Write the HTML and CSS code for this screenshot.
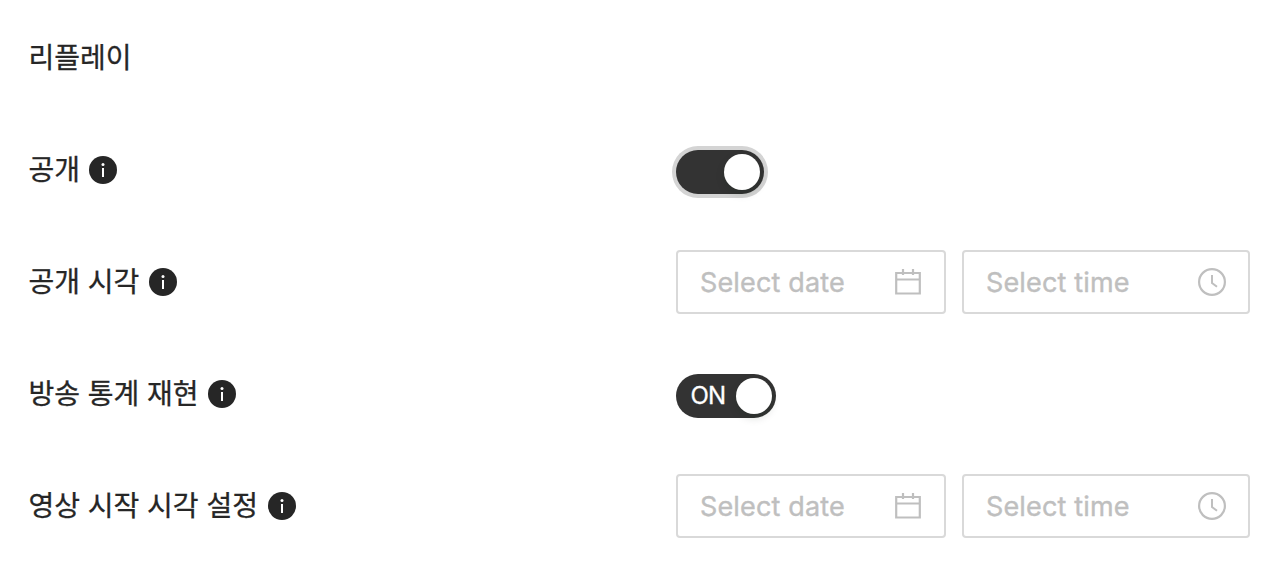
FILE: index.html
```html
<!DOCTYPE html>
<html lang="ko">
<head>
  <meta charset="UTF-8">
  <title>리플레이</title>
  <link rel="stylesheet" href="styles.css">
</head>
<body>
  <!-- 아이콘 -->
  <svg class="sprite" width="0" height="0">
    <symbol id="info" viewBox="0 0 28 28">
      <circle cx="14" cy="14" r="14" fill="#262626"/>
      <circle cx="14" cy="8.5" r="1.5" fill="#fff"/>
      <rect x="13" y="12" width="2" height="9" fill="#fff"/>
    </symbol>
    <symbol id="calendar" viewBox="0 0 28 28">
      <path d="M2.2 5h23.6v20.500H2.200zM2 11.500h24M9 1v6M19 1v6" fill="none" stroke="currentColor" stroke-width="2.2"/>
    </symbol>
    <symbol id="clock" viewBox="0 0 28 28">
      <circle cx="14" cy="14" r="12.9" fill="none" stroke="currentColor" stroke-width="2.2"/>
      <path d="M14 7v8l5 3.700" fill="none" stroke="currentColor" stroke-width="2"/>
    </symbol>
  </svg>

  <div class="replay">
    <div class="row">
      <div class="label"><span>리플레이</span></div>
    </div>
    <div class="row">
      <div class="label"><span>공개</span><svg class="info"><use href="#info"/></svg></div>
      <button class="switch focus"><span class="handle"></span></button>
    </div>
    <div class="row">
      <div class="label"><span>공개 시각</span><svg class="info"><use href="#info"/></svg></div>
      <div class="pickers">
        <div class="picker date"><span class="placeholder">Select date</span><svg class="icon"><use href="#calendar"/></svg></div>
        <div class="picker time"><span class="placeholder">Select time</span><svg class="icon"><use href="#clock"/></svg></div>
      </div>
    </div>
    <div class="row">
      <div class="label"><span>방송 통계 재현</span><svg class="info"><use href="#info"/></svg></div>
      <button class="switch on"><span class="text">ON</span><span class="handle"></span></button>
    </div>
    <div class="row">
      <div class="label"><span>영상 시작 시각 설정</span><svg class="info"><use href="#info"/></svg></div>
      <div class="pickers">
        <div class="picker date"><span class="placeholder">Select date</span><svg class="icon"><use href="#calendar"/></svg></div>
        <div class="picker time"><span class="placeholder">Select time</span><svg class="icon"><use href="#clock"/></svg></div>
      </div>
    </div>
  </div>
</body>
</html>
```
FILE: styles.css
```css
* {
  box-sizing: border-box;
}
body {
  margin: 0;
  background-color: #fff;
  color: #262626;
  font-family: Inter, "Noto Sans CJK KR", sans-serif;
  font-size: 28px;
}
.sprite {
  display: block;
}
.replay {
  padding: 2px 38px 0 28px;
}
.row {
  display: flex;
  align-items: center;
  height: 112px;
}
.label {
  display: flex;
  align-items: center;
  width: 648px;
  font-family: "Noto Sans CJK KR", sans-serif;
  line-height: 44px;
}
.label span {
  padding-bottom: 5px;
  padding-left: 0.4px;
  -webkit-text-stroke: 0.3px #262626;
}
.info {
  width: 28px;
  height: 28px;
  margin-left: 9.5px;
}
.switch {
  display: flex;
  align-items: center;
  justify-content: flex-end;
  width: 88px;
  height: 44px;
  margin: 4px 0 0;
  padding: 0 4px;
  border: 0;
  border-radius: 22px;
  background-color: #333;
  color: #fff;
}
.switch.focus {
  box-shadow: 0 0 0 4px #d4d4d4;
}
.switch.on {
  justify-content: space-between;
  width: 100px;
  padding-left: 14.5px;
}
.switch .text {
  font-family: Inter, sans-serif;
  font-size: 24px;
  line-height: 44px;
  letter-spacing: -0.8px;
  -webkit-text-stroke: 0.3px #fff;
}
.handle {
  width: 36px;
  height: 36px;
  border-radius: 50%;
  background-color: #fff;
  box-shadow: 0 4px 8px rgba(0, 35, 11, 0.15);
}
.pickers {
  display: flex;
  gap: 16px;
}
.picker {
  display: flex;
  align-items: center;
  justify-content: space-between;
  height: 64px;
  padding: 0 22px;
  border: 2px solid #d9d9d9;
  border-radius: 4px;
  color: #bfbfbf;
}
.date {
  width: 270px;
}
.time {
  width: 288px;
}
.placeholder {
  padding-top: 1px;
  font-size: 27px;
  line-height: 44px;
  letter-spacing: 0.15px;
  -webkit-text-stroke: 0.4px #bfbfbf;
}
.icon {
  width: 28px;
  height: 28px;
}
```
